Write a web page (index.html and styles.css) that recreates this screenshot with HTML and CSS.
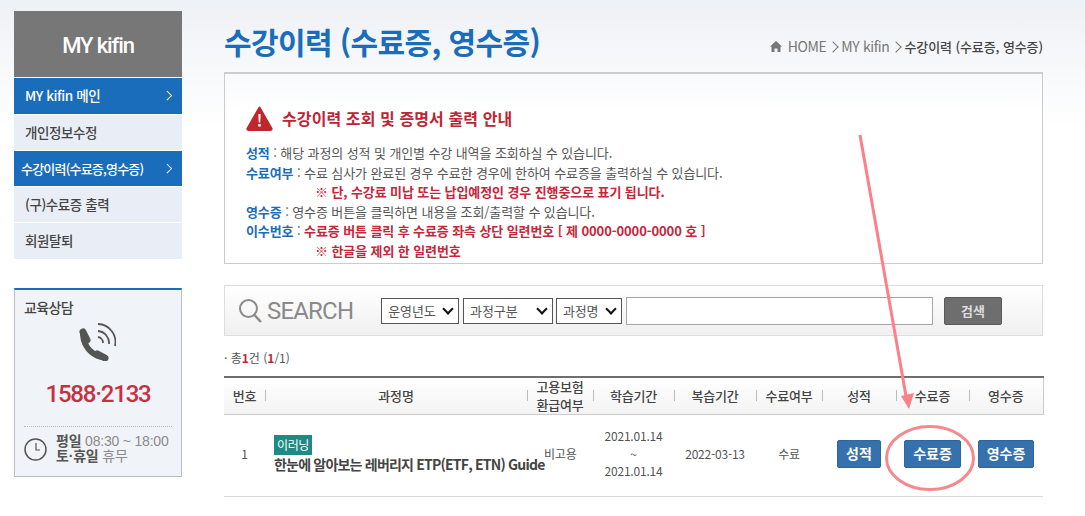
FILE: index.html
```html
<!DOCTYPE html>
<html lang="ko">
<head>
  <meta charset="UTF-8">
  <title>수강이력 (수료증, 영수증)</title>
  <link rel="stylesheet" href="styles.css">
</head>
<body>

<div class="wrap">

  <!-- 왼쪽 메뉴 -->
  <aside class="side">
    <div class="side-title">MY kifin</div>
    <ul class="side-menu">
      <li class="on">MY kifin 메인<span class="arr"></span></li>
      <li>개인정보수정</li>
      <li class="on tight">수강이력(수료증,영수증)<span class="arr"></span></li>
      <li>(구)수료증 출력</li>
      <li>회원탈퇴</li>
    </ul>

    <div class="call">
      <h3>교육상담</h3>
      <svg class="call-icon" width="38" height="38" viewBox="0 0 38 38">
        <g fill="none" stroke="#555" stroke-linecap="round">
          <path d="M5 9 9 17M19.500 31 27 35" stroke-width="7"/>
          <path d="M5 12C6 23 13 31 23 34" stroke-width="6"/>
          <path d="M20 1A18 18 0 0 1 37 23M20 8A12 12 0 0 1 31 21M20 14A6 6 0 0 1 25 20" stroke-width="1.800" stroke-linecap="butt"/>
        </g>
      </svg>
      <div class="call-num">1588·2133</div>
      <div class="call-time">
        <svg width="23" height="23" viewBox="0 0 23 23">
          <circle cx="11.500" cy="11.500" r="10.500" fill="none" stroke="#555" stroke-width="1.500"/>
          <path d="M12 5v7h4" fill="none" stroke="#555" stroke-width="1.200"/>
        </svg>
        <p><b>평일</b> 08:30 ~ 18:00<br><b>토·휴일</b> 휴무</p>
      </div>
    </div>
  </aside>

  <!-- 본문 -->
  <main class="main">
    <div class="top">
      <h1>수강이력 (수료증, 영수증)</h1>
      <div class="crumb">
        <svg width="12" height="11" viewBox="0 0 12 11"><path d="M6 0 0 5.500h1.500V11h3V7.500h3V11h3V5.500H12z" fill="#777"/></svg>
        HOME <span class="gt"></span> MY kifin <span class="gt"></span> <b>수강이력 (수료증, 영수증)</b>
      </div>
    </div>

    <section class="notice">
      <h2>
        <svg width="27" height="25" viewBox="0 0 27 25">
          <path d="M13.500 1.500 1.500 22.500a1 1 0 0 0 1 1.500h22a1 1 0 0 0 1-1.500z" fill="#c0272d" stroke="#c0272d" stroke-width="2" stroke-linejoin="round"/>
          <path d="M12.300 8h2.400l-.5 8.500h-1.400z M12.200 18h2.600v2.600h-2.600z" fill="#fff"/>
        </svg>
        수강이력 조회 및 증명서 출력 안내
      </h2>
      <p><b class="blue">성적</b> : 해당 과정의 성적 및 개인별 수강 내역을 조회하실 수 있습니다.</p>
      <p><b class="blue">수료여부</b> : 수료 심사가 완료된 경우 수료한 경우에 한하여 수료증을 출력하실 수 있습니다.</p>
      <p class="indent red">※ 단, 수강료 미납 또는 납입예정인 경우 진행중으로 표기 됩니다.</p>
      <p><b class="blue">영수증</b> : 영수증 버튼을 클릭하면 내용을 조회/출력할 수 있습니다.</p>
      <p><b class="blue">이수번호</b> : <span class="red">수료증 버튼 클릭 후 수료증 좌측 상단 일련번호 [ 제 0000-0000-0000 호 ]</span></p>
      <p class="indent red">※ 한글을 제외 한 일련번호</p>
    </section>

    <form class="search">
      <svg width="26" height="26" viewBox="0 0 26 26">
        <circle cx="10.500" cy="10.500" r="8.500" fill="none" stroke="#8a8a8a" stroke-width="2"/>
        <path d="m16.500 17 6.500 7" fill="none" stroke="#8a8a8a" stroke-width="2.500"/>
      </svg>
      <span class="search-word">SEARCH</span>
      <div class="sel sel-year">운영년도<span class="chev"></span></div>
      <div class="sel sel-type">과정구분<span class="chev"></span></div>
      <div class="sel sel-name">과정명<span class="chev"></span></div>
      <div class="search-input"></div>
      <div class="search-btn">검색</div>
    </form>

    <p class="count">· 총<b class="red">1</b>건 (<b class="red">1</b>/1)</p>

    <table class="list">
      <colgroup>
        <col class="c-no"><col class="c-name"><col class="c-ins"><col class="c-date"><col class="c-date2">
        <col class="c-done"><col class="c-btn"><col class="c-btn2"><col class="c-btn">
      </colgroup>
      <thead>
        <tr>
          <th>번호</th>
          <th>과정명</th>
          <th>고용보험<br>환급여부</th>
          <th>학습기간</th>
          <th>복습기간</th>
          <th>수료여부</th>
          <th>성적</th>
          <th>수료증</th>
          <th>영수증</th>
        </tr>
      </thead>
      <tbody>
        <tr>
          <td>1</td>
          <td class="title"><span class="tag">이러닝</span><b>한눈에 알아보는 레버리지 ETP(ETF, ETN) Guide</b></td>
          <td class="ins">비고용</td>
          <td>2021.01.14<br>~<br>2021.01.14</td>
          <td>2022-03-13</td>
          <td>수료</td>
          <td><span class="btn">성적</span></td>
          <td><span class="btn">수료증</span></td>
          <td><span class="btn">영수증</span></td>
        </tr>
      </tbody>
    </table>
  </main>
</div>

<!-- 빨간 표시 (화살표, 동그라미) -->
<svg class="marks" width="1085" height="516" viewBox="0 0 1085 516">
  <path d="M860 135 906 396" fill="none" stroke="#fb8088" stroke-width="3"/>
  <path d="M901 396 914 393 909 409z" fill="#fb8088"/>
  <ellipse cx="930" cy="458" rx="43.500" ry="31.500" fill="none" stroke="#f58a8e" stroke-width="3"/>
</svg>

</body>
</html>
```

FILE: styles.css
```css
* {
  box-sizing: border-box;
}

html, body {
  margin: 0;
  padding: 0;
  height: 516px;
  overflow: hidden;
}

body {
  position: relative;
  font-family: "Noto Sans CJK KR", "Noto Sans", sans-serif;
  font-size: 12px;
  color: #555;
  background: linear-gradient(#eef1f5, #fff 130px);
}

p, h1, h2, h3, ul {
  margin: 0;
  padding: 0;
}

.wrap {
  display: flex;
  gap: 42px;
  padding-left: 14px;
}

/* 왼쪽 메뉴 */
.side {
  width: 168px;
  padding-top: 11px;
}

.side-title {
  height: 66px;
  line-height: 70px;
  background: #777;
  color: #fff;
  font-family: Roboto, sans-serif;
  font-size: 22px;
  font-weight: 500;
  letter-spacing: -1.100px;
  text-align: center;
}

.side-menu {
  list-style: none;
  margin-top: 1px;
  display: flex;
  flex-direction: column;
  gap: 1px;
}

.side-menu li {
  position: relative;
  height: 35px;
  line-height: 35px;
  padding-left: 11px;
  background: #e9edf5;
  color: #444;
  font-size: 13.500px;
  font-weight: 500;
  letter-spacing: -.4px;
}

.side-menu li:first-child,
.side-menu li:last-child {
  height: 36px;
}

.side-menu li.on {
  background: #1a6dbb;
  color: #fff;
}

.side-menu li.tight {
  padding-left: 7px;
  font-size: 13px;
  letter-spacing: -.8px;
}

.arr {
  position: absolute;
  right: 12px;
  top: 14px;
  width: 6.500px;
  height: 6.500px;
  border-top: 1.500px solid #fff;
  border-right: 1.500px solid #fff;
  transform: rotate(45deg);
}

.call {
  height: 189px;
  margin-top: 29px;
  padding: 0 9px;
  background: #f0f3f7;
  border: 1px solid #b9bcc0;
  border-top: 2px solid #1a6dbb;
}

.call h3 {
  margin-top: 7px;
  font-size: 14px;
  font-weight: 500;
  color: #444;
  letter-spacing: -.6px;
}

.call-icon {
  display: block;
  margin: 6px auto 0 54px;
}

.call-num {
  margin-top: 15px;
  height: 51px;
  border-bottom: 1px dotted #bbb;
  font-family: Roboto, sans-serif;
  font-size: 24px;
  font-weight: 500;
  letter-spacing: -1.200px;
  line-height: 36px;
  color: #c8303f;
  text-align: center;
}

.call-time {
  display: flex;
  gap: 9px;
  align-items: center;
  margin-top: 7px;
}

.call-time p {
  font-family: "Liberation Sans", "Noto Sans CJK KR", sans-serif;
  font-size: 14px;
  line-height: 15px;
  color: #8a8a8a;
  white-space: nowrap;
  letter-spacing: -.2px;
}

.call-time b {
  color: #555;
  font-weight: 700;
}

/* 본문 */
.main {
  width: 819px;
}

.top {
  display: flex;
  justify-content: space-between;
  height: 72px;
}

.top h1 {
  margin-top: 19px;
  font-size: 30px;
  line-height: 44px;
  font-weight: 700;
  color: #1a6dbb;
  letter-spacing: -.6px;
  white-space: nowrap;
}

.crumb {
  margin-top: 36px;
  font-size: 14px;
  line-height: 20px;
  color: #777;
  letter-spacing: -.4px;
}

.crumb b {
  color: #444;
  font-size: 13px;
  font-weight: 500;
  letter-spacing: -.1px;
}

.crumb svg {
  margin-right: 2px;
}

.gt {
  display: inline-block;
  width: 8px;
  height: 8px;
  margin: 0 1px 1px -1px;
  border-top: 1px solid #777;
  border-right: 1px solid #777;
  transform: rotate(45deg);
}

.notice {
  height: 192px;
  padding: 29px 21px 0;
  background: linear-gradient(#f9fafc, #fff 40px);
  border: 1px solid #ccc;
  border-top: 2px solid #ccc;
}

.notice h2 {
  display: flex;
  align-items: center;
  gap: 9px;
  height: 30px;
  margin-bottom: 10px;
  font-size: 16px;
  font-weight: 700;
  color: #bd2534;
  letter-spacing: .1px;
}

.notice p {
  height: 19.600px;
  font-size: 13px;
  line-height: 19px;
  color: #555;
  white-space: nowrap;
  letter-spacing: -.1px;
}

.notice b {
  font-weight: 700;
}

.blue {
  color: #1a6dbb;
}

.red {
  color: #c8243a;
}

.notice .red {
  color: #c8243a;
  font-weight: 700;
}

.notice .indent {
  padding-left: 69px;
}

.search {
  display: flex;
  align-items: center;
  height: 51px;
  margin-top: 21px;
  padding: 0 40px 0 13px;
  background: linear-gradient(#fff, #f0f0f0);
  border: 1px solid #ddd;
}

.search-word {
  margin: 0 28px 0 3px;
  font-family: Roboto, sans-serif;
  font-size: 24px;
  color: #8a8a8a;
  letter-spacing: -.8px;
}

.sel {
  position: relative;
  height: 26px;
  margin-right: 4px;
  padding-left: 6px;
  line-height: 24px;
  background: #fff;
  border: 1px solid #555;
  font-size: 13px;
  letter-spacing: -.1px;
  color: #555;
}

.sel-year {
  width: 78px;
}

.sel-type {
  width: 90px;
  margin-right: 3px;
}

.sel-name {
  width: 66px;
}

.chev {
  position: absolute;
  right: 6px;
  top: 6px;
  width: 8px;
  height: 8px;
  border-right: 2px solid #111;
  border-bottom: 2px solid #111;
  transform: rotate(45deg);
}

.search-input {
  width: 308px;
  height: 28px;
  background: #fff;
  border: 1px solid #a5a5a5;
}

.search-btn {
  width: 58px;
  height: 28px;
  margin-left: 11px;
  line-height: 26px;
  background: #6e6e6e;
  border: 1px solid #5a5a5a;
  border-radius: 2px;
  color: #ddd;
  font-size: 13px;
  font-weight: 700;
  text-align: center;
}

.count {
  margin-top: 13px;
  height: 27px;
  line-height: 18px;
  font-size: 12px;
  color: #555;
}

.list {
  width: 100%;
  border-collapse: collapse;
  table-layout: fixed;
}

.c-no { width: 41px; }
.c-name { width: 262px; }
.c-ins { width: 66px; }
.c-date { width: 81px; }
.c-date2 { width: 82px; }
.c-done { width: 66px; }
.c-btn { width: 74px; }
.c-btn2 { width: 73px; }

.list th {
  position: relative;
  height: 37px;
  padding: 0;
  background: linear-gradient(#fff, #f3f3f3);
  border-top: 2px solid #6e6e6e;
  border-bottom: 1px solid #ccc;
  color: #444;
  font-size: 13px;
  font-weight: 500;
  line-height: 17.500px;
  letter-spacing: -.2px;
}

.list th:last-child {
  border-right: 1px solid #ccc;
}

.list th + th::before {
  content: "";
  position: absolute;
  left: 0;
  top: 12px;
  height: 11px;
  border-left: 1px solid #bbb;
}

.list td {
  height: 82px;
  padding: 0 0 3px;
  border-bottom: 1px solid #d8d8d8;
  font-size: 12px;
  line-height: 17.500px;
  text-align: center;
  color: #555;
  letter-spacing: -.2px;
}

.list td.title {
  text-align: left;
  padding: 0 0 2px 9px;
  white-space: nowrap;
}

.list td.title b {
  display: block;
  line-height: 18px;
  font-size: 14px;
  font-weight: 700;
  letter-spacing: -.8px;
  color: #444;
}

.list td.ins {
  text-align: left;
  padding-left: 17px;
}

.tag {
  display: block;
  width: 38px;
  height: 20px;
  background: #1f8a84;
  color: #fff;
  font-size: 12px;
  line-height: 19px;
  letter-spacing: -.4px;
  text-align: center;
}

.btn {
  display: inline-block;
  height: 28px;
  padding: 0 8px;
  line-height: 25px;
  background: #3471ad;
  border: 1px solid #2e66a0;
  border-radius: 2px;
  color: #fff;
  font-size: 14px;
  font-weight: 700;
  letter-spacing: 0;
}

/* 빨간 표시 */
.marks {
  position: absolute;
  left: 0;
  top: 0;
  pointer-events: none;
}
```
